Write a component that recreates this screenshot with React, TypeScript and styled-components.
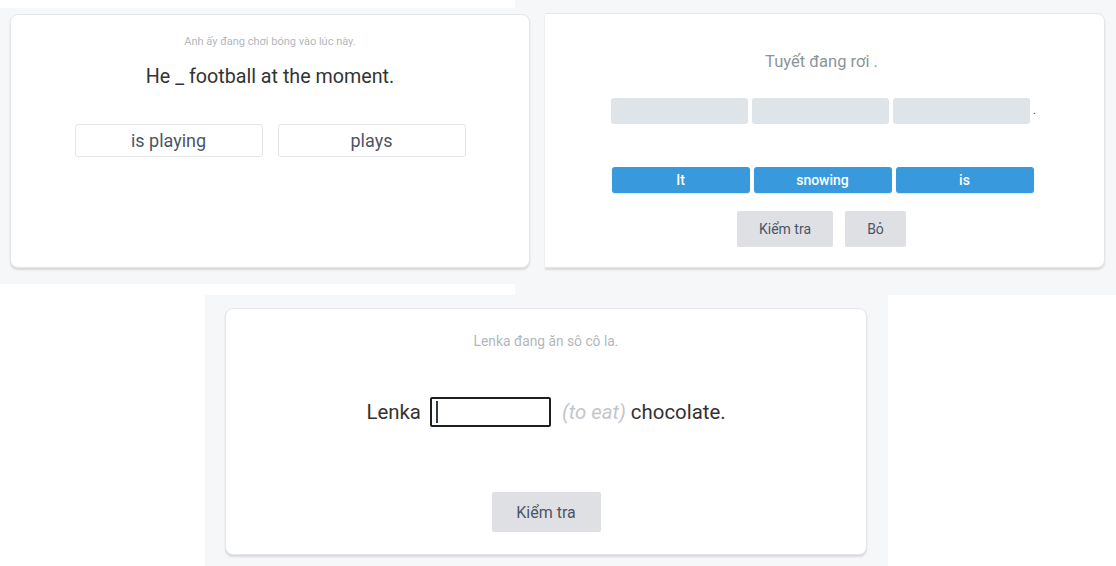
import React, { FC } from 'react';
import styled, { createGlobalStyle } from 'styled-components';

const Global = createGlobalStyle`
  body {
    margin: 0;
    background: #ffffff;
    font-family: Roboto, 'Liberation Sans', sans-serif;
  }
`;

const Page = styled.div`
  width: 1116px;
  height: 566px;
  overflow: hidden;
`;

// top row: two cropped screenshots side by side
const TopRow = styled.div`
  display: flex;
  align-items: flex-start;
  height: 295px;
  background: linear-gradient(to right, #ffffff 515px, #f6f7f9 515px);
`;

const BottomRow = styled.div`
  display: flex;
  padding-left: 205px;
`;

const Shot = styled.div<{ $w: number; $h: number; $mt?: number; $pad: string }>`
  box-sizing: border-box;
  width: ${(p) => p.$w}px;
  height: ${(p) => p.$h}px;
  margin-top: ${(p) => p.$mt || 0}px;
  padding: ${(p) => p.$pad};
  background: #f6f7f9;
`;

const Card = styled.div<{ $w: number; $h: number; $cropped?: boolean }>`
  box-sizing: border-box;
  width: ${(p) => p.$w}px;
  height: ${(p) => p.$h}px;
  display: flex;
  flex-direction: column;
  align-items: center;
  background: #ffffff;
  border: 1px solid #e4e6e9;
  border-left: ${(p) => (p.$cropped ? 'none' : '1px solid #e4e6e9')};
  border-radius: ${(p) => (p.$cropped ? '0 8px 8px 0' : '8px')};
  box-shadow: 0 2px 2px rgba(0, 0, 0, 0.12);
  padding-right: ${(p) => (p.$cropped ? 6 : 0)}px;
`;

const Hint = styled.div<{ $size: number; $mt: number }>`
  margin-top: ${(p) => p.$mt}px;
  font-size: ${(p) => p.$size}px;
  line-height: 16px;
  color: #b3b7bd;
`;

const Sentence = styled.div`
  margin-top: 15px;
  font-size: 19.7px;
  line-height: 24px;
  color: #333333;
`;

const Choices = styled.div`
  display: flex;
  gap: 15px;
  margin-top: 35px;
`;

const Choice = styled.button`
  box-sizing: border-box;
  width: 188px;
  height: 33px;
  background: #ffffff;
  border: 1px solid #e4e6ea;
  border-radius: 3px;
  font-family: inherit;
  font-size: 18px;
  color: #4b5567;
  padding: 0;
`;

const Prompt = styled.div`
  margin-top: 38px;
  font-size: 16.5px;
  line-height: 20px;
  color: #8b9599;
`;

const SlotRow = styled.div`
  display: flex;
  align-items: center;
  gap: 4px;
  margin-top: 26px;
  margin-left: 4px;
`;

const Slot = styled.div`
  width: 137px;
  height: 26px;
  border-radius: 3px;
  background: #dfe4e8;
`;

const Dot = styled.span`
  margin-left: -1px;
  font-size: 11px;
  line-height: 26px;
  color: #333333;
`;

const WordRow = styled.div`
  display: flex;
  gap: 4px;
  margin-top: 43px;
  margin-right: -2px;
`;

const Word = styled.button`
  width: 138px;
  height: 26px;
  padding: 0;
  border: none;
  border-radius: 3px;
  background: #3899dc;
  box-shadow: 0 1px 1px rgba(0, 0, 0, 0.12);
  font-family: inherit;
  font-size: 14px;
  font-weight: 500;
  color: #ffffff;
`;

const Actions = styled.div<{ $mt: number }>`
  display: flex;
  gap: 12px;
  margin-top: ${(p) => p.$mt}px;
`;

const Action = styled.button<{ $w: number; $h: number; $size: number }>`
  width: ${(p) => p.$w}px;
  height: ${(p) => p.$h}px;
  padding: 0;
  border: none;
  border-radius: 2px;
  background: #dfe0e3;
  font-family: inherit;
  font-size: ${(p) => p.$size}px;
  color: #4b5567;
`;

const FillRow = styled.div`
  display: flex;
  align-items: center;
  margin-top: 48px;
  font-size: 20.4px;
  color: #333333;
`;

const Blank = styled.div`
  box-sizing: border-box;
  display: flex;
  align-items: center;
  width: 121px;
  height: 30px;
  margin: 0 11px 0 9px;
  padding-left: 4px;
  border: 2px solid #1e1e1e;
  border-radius: 2px;
`;

const Caret = styled.span`
  width: 2px;
  height: 22px;
  background: #2f3b4c;
`;

const Cue = styled.span`
  font-style: italic;
  color: #c2c6cb;
  margin-right: 5px;
`;

const App: FC = () => {
  return (
    <Page>
      <Global />
      <TopRow>
        <Shot $w={545} $h={276} $mt={8} $pad="6px 15px 0 10px">
          <Card $w={520} $h={254}>
            <Hint $size={11} $mt={19}>Anh ấy đang chơi bóng vào lúc này.</Hint>
            <Sentence>He _ football at the moment.</Sentence>
            <Choices>
              <Choice>is playing</Choice>
              <Choice>plays</Choice>
            </Choices>
          </Card>
        </Shot>

        <Shot $w={571} $h={295} $pad="13px 11px 0 0">
          <Card $w={560} $h={255} $cropped>
            <Prompt>Tuyết đang rơi .</Prompt>
            <SlotRow>
              <Slot />
              <Slot />
              <Slot />
              <Dot>.</Dot>
            </SlotRow>
            <WordRow>
              <Word>It</Word>
              <Word>snowing</Word>
              <Word>is</Word>
            </WordRow>
            <Actions $mt={18}>
              <Action $w={96} $h={36} $size={14}>Kiểm tra</Action>
              <Action $w={61} $h={36} $size={14}>Bỏ</Action>
            </Actions>
          </Card>
        </Shot>
      </TopRow>

      <BottomRow>
        <Shot $w={683} $h={271} $pad="13px 21px 0 20px">
          <Card $w={642} $h={247}>
            <Hint $size={13.8} $mt={24}>Lenka đang ăn sô cô la.</Hint>
            <FillRow>
              <span>Lenka</span>
              <Blank>
                <Caret />
              </Blank>
              <Cue>(to eat)</Cue>
              <span>chocolate.</span>
            </FillRow>
            <Actions $mt={65}>
              <Action $w={109} $h={40} $size={16}>Kiểm tra</Action>
            </Actions>
          </Card>
        </Shot>
      </BottomRow>
    </Page>
  );
};

export default App;
